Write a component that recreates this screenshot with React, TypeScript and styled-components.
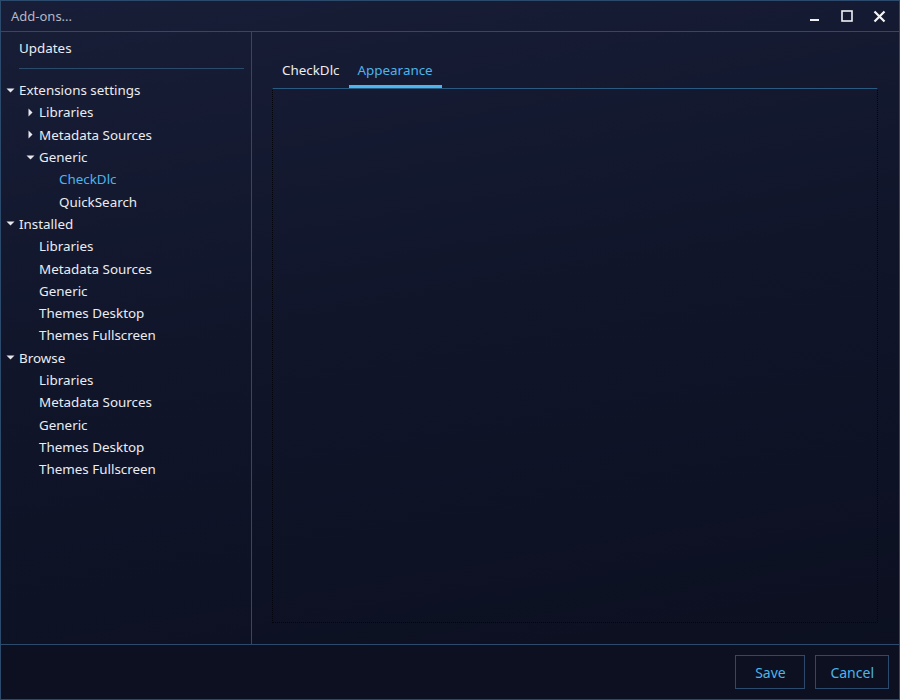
import React from 'react';
import styled, {createGlobalStyle} from "styled-components";

const GlobalStyle = createGlobalStyle`
  html, body {
    margin: 0;
    padding: 0;
    background: #0d1122;
  }
  * {
    box-sizing: border-box;
  }
`

type TreeItem = {
    label: string,
    level: number,
    arrow?: 'open' | 'closed',
    selected?: boolean
}

const tree: TreeItem[] = [
    {label: 'Extensions settings', level: 0, arrow: 'open'},
    {label: 'Libraries', level: 1, arrow: 'closed'},
    {label: 'Metadata Sources', level: 1, arrow: 'closed'},
    {label: 'Generic', level: 1, arrow: 'open'},
    {label: 'CheckDlc', level: 2, selected: true},
    {label: 'QuickSearch', level: 2},
    {label: 'Installed', level: 0, arrow: 'open'},
    {label: 'Libraries', level: 1},
    {label: 'Metadata Sources', level: 1},
    {label: 'Generic', level: 1},
    {label: 'Themes Desktop', level: 1},
    {label: 'Themes Fullscreen', level: 1},
    {label: 'Browse', level: 0, arrow: 'open'},
    {label: 'Libraries', level: 1},
    {label: 'Metadata Sources', level: 1},
    {label: 'Generic', level: 1},
    {label: 'Themes Desktop', level: 1},
    {label: 'Themes Fullscreen', level: 1},
]

function Arrow({kind}: { kind: 'open' | 'closed' }) {
    return kind === 'open' ? (
        <svg width="9" height="9" viewBox="0 0 9 9">
            <path d="M0.5 2.5 L8.5 2.5 L4.5 6.5 Z" fill="#e8e8ec"/>
        </svg>
    ) : (
        <svg width="9" height="9" viewBox="0 0 9 9">
            <path d="M2.5 0.5 L6.5 4.5 L2.5 8.5 Z" fill="#e8e8ec"/>
        </svg>
    )
}

function App() {
    return (
        <>
            <GlobalStyle/>
            <Window>
                <TitleBar>
                    <Title>Add-ons...</Title>
                    <WinButtons>
                        <WinBtn>
                            <svg width="12" height="12" viewBox="0 0 12 12">
                                <rect x="1" y="9" width="9" height="2" fill="#f0f0f4"/>
                            </svg>
                        </WinBtn>
                        <WinBtn>
                            <svg width="12" height="12" viewBox="0 0 12 12">
                                <rect x="1" y="1" width="10" height="10" fill="none" stroke="#f0f0f4" strokeWidth="1.6"/>
                            </svg>
                        </WinBtn>
                        <WinBtn>
                            <svg width="13" height="13" viewBox="0 0 13 13">
                                <path d="M1.5 1.5 L11.5 11.5 M11.5 1.5 L1.5 11.5" stroke="#f4f4f8" strokeWidth="2.2"/>
                            </svg>
                        </WinBtn>
                    </WinButtons>
                </TitleBar>
                <Body>
                    <Sidebar>
                        <Updates>Updates</Updates>
                        <Separator/>
                        <Tree>
                            {tree.map((item, i) => (
                                <TreeRow key={i} level={item.level} selected={item.selected}>
                                    <ArrowSlot>{item.arrow && <Arrow kind={item.arrow}/>}</ArrowSlot>
                                    {item.label}
                                </TreeRow>
                            ))}
                        </Tree>
                    </Sidebar>
                    <Main>
                        <Tabs>
                            <Tab>CheckDlc</Tab>
                            <Tab active={true}>Appearance</Tab>
                        </Tabs>
                        <TabContent/>
                    </Main>
                </Body>
                <Footer>
                    <Button>Save</Button>
                    <Button>Cancel</Button>
                </Footer>
            </Window>
        </>
    );
}

const Window = styled.div`
  width: 900px;
  height: 700px;
  display: flex;
  flex-direction: column;
  border: 1px solid #2c4b6c;
  background: linear-gradient(170deg, #181e37 0%, #10152a 45%, #0b0f1f 100%);
  font-family: "Noto Sans", "DejaVu Sans", sans-serif;
  font-size: 13.4px;
  color: #ececf0;
`

const TitleBar = styled.div`
  height: 31px;
  flex: none;
  display: flex;
  align-items: center;
  justify-content: space-between;
  border-bottom: 1px solid #2c4b6c;
  padding-left: 10px;
`

const Title = styled.div`
  color: #b4b8c4;
  font-size: 13px;
`

const WinButtons = styled.div`
  display: flex;
  align-items: center;
  padding-right: 4px;
`

const WinBtn = styled.div`
  width: 32px;
  height: 30px;
  display: flex;
  align-items: center;
  justify-content: center;
`

const Body = styled.div`
  flex: 1;
  display: flex;
  min-height: 0;
`

const Sidebar = styled.div`
  width: 251px;
  flex: none;
  border-right: 1px solid #2c4b6c;
  padding: 5px 7px 0 0;
`

const Updates = styled.div`
  height: 22px;
  line-height: 22px;
  padding-left: 18px;
`

const Separator = styled.div`
  height: 1px;
  margin: 9px 0 10px 18px;
  background: #2c4b6c;
`

const Tree = styled.div`
  display: flex;
  flex-direction: column;
`

const TreeRow = styled.div<{ level: number, selected?: boolean }>`
  height: 22.3px;
  display: flex;
  align-items: center;
  padding-left: ${props => 5 + props.level * 20}px;
  color: ${props => props.selected ? '#4db4ec' : '#ececf0'};
  white-space: nowrap;
`

const ArrowSlot = styled.span`
  width: 13px;
  height: 9px;
  display: flex;
  align-items: center;
  flex: none;
`

const Main = styled.div`
  flex: 1;
  display: flex;
  flex-direction: column;
  padding: 23px 21px 21px 20px;
`

const Tabs = styled.div`
  display: flex;
  height: 33px;
  padding-left: 1px;
`

const Tab = styled.div<{ active?: boolean }>`
  padding: 0 9px 1px;
  display: flex;
  align-items: center;
  color: ${props => props.active ? '#4db4ec' : '#ececf0'};
  border-bottom: 3px solid ${props => props.active ? '#4db4ec' : 'transparent'};
`

const TabContent = styled.div`
  flex: 1;
  border: 1px dotted #03050c;
  border-top: 1px solid #2b5a80;
`

const Footer = styled.div`
  height: 55px;
  flex: none;
  display: flex;
  justify-content: flex-end;
  align-items: center;
  gap: 10px;
  padding-right: 10px;
  border-top: 1px solid #2c4b6c;
  background: #0c1020;
`

const Button = styled.button`
  height: 34px;
  padding: 0 14px;
  min-width: 70px;
  background: transparent;
  border: 1px solid #2c4b6c;
  color: #4db4ec;
  font-family: inherit;
  font-size: 14px;
`

export default App;
